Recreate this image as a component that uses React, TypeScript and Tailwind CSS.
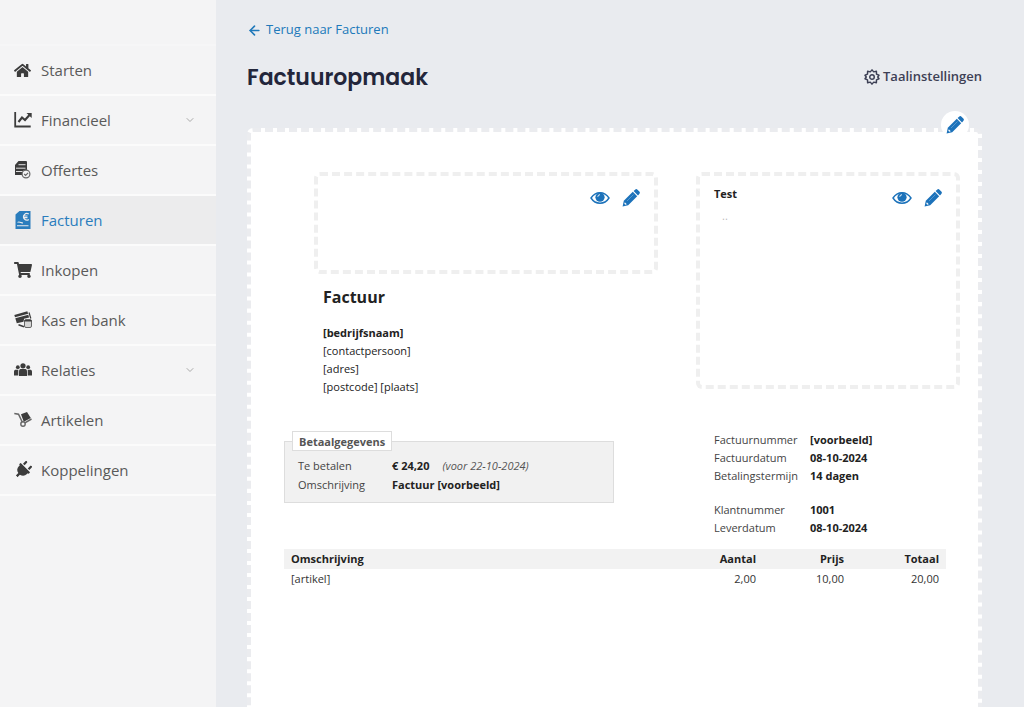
import type { ReactNode } from "react";
import { FaHome, FaPlug, FaShoppingCart } from "react-icons/fa";
import { LuArrowLeft, LuChevronDown } from "react-icons/lu";

function ChartIcon() {
  return (
    <svg viewBox="0 0 18 18" className="size-[18px]" fill="none" stroke="currentColor" strokeWidth="1.8">
      <path d="M1.2 1v14.500h15.500" />
      <path d="M4.500 11 8 6.500l3 2.500 4.500-5" strokeWidth="2.100" />
      <path d="M12.500 2h5.200v5z" fill="currentColor" stroke="none" />
    </svg>
  );
}

function QuoteIcon() {
  return (
    <svg viewBox="0 0 18 18" className="size-[18px]" fill="currentColor">
      <path d="M4.500 0H12a1 1 0 0 1 1 1v8a5 5 0 0 0-4.500 5H1V4z" />
      <path d="M4.500 3.700h7M2 7.200h9.500M2 10.500h7" stroke="#f4f4f5" strokeWidth=".9" />
      <circle cx="12" cy="13" r="3.900" fill="#f4f4f5" stroke="#666" strokeWidth="1.200" />
      <path d="m10.200 13 1.400 1.400 2.500-2.600" fill="none" stroke="#666" strokeWidth="1.200" />
    </svg>
  );
}

function InvoiceIcon() {
  return (
    <svg viewBox="0 0 18 18" className="size-[18px]" fill="currentColor">
      <path d="M5.500 0H16.500v18H1.500V3.500z" />
      <path d="M14.800 3.100a3.300 3.300 0 1 0 0 5.400M9 5h4.500M9 6.700h4.500" fill="none" stroke="#ececed" strokeWidth="1.200" />
      <path d="M3.500 11.400c2-1.200 3.500.6 5.500.6M3 14.800h11.500" fill="none" stroke="#ececed" strokeWidth="1.100" />
    </svg>
  );
}

function CardsIcon() {
  return (
    <svg viewBox="0 0 18 18" className="size-[18px]" fill="currentColor">
      <path d="m.3 4 13-3.700.8 2.500L1 6.300z" />
      <path d="m1.300 7.300 13-3.500.8 2.700-5 1.200-.6 3-6.700 1.600z" />
      <path d="M15 1.500 16.800 7.500" stroke="currentColor" strokeWidth="1.200" />
      <rect x="10.500" y="8.500" width="7" height="8" rx="1.500" fill="#d5d5d5" stroke="#666" strokeWidth="1" />
      <path d="M10.500 9.700h7M4.500 13.700l5.500 2" stroke="currentColor" strokeWidth="1.600" />
    </svg>
  );
}

function PeopleIcon() {
  return (
    <svg viewBox="0 0 18 14" className="h-[14px] w-[18px]" fill="currentColor">
      <circle cx="9" cy="2.800" r="2.600" />
      <circle cx="3.800" cy="4.200" r="1.900" />
      <circle cx="14.200" cy="4.200" r="1.900" />
      <path d="M5 13V8.200C5 6.600 6 6 7.200 6h3.600C12 6 13 6.600 13 8.200V13z" />
      <path d="M0 12.500V8.800C0 7.400.8 6.800 2 6.800h2.300V12.500zM18 12.500V8.800c0-1.400-.8-2-2-2h-2.300V12.500z" />
    </svg>
  );
}

function DollyIcon() {
  return (
    <svg viewBox="0 0 18 18" className="size-[18px]" fill="currentColor">
      <path d="m7 3.300 6-2.300 3.800 6-7 3.800z" />
      <path d="M.3 2.500 4.500 3.200l4 8.300M10.500 12.200l7-4.200" fill="none" stroke="#666" strokeWidth="1.500" />
      <circle cx="9" cy="13" r="2.200" fill="#f4f4f5" stroke="#666" strokeWidth="1.400" />
    </svg>
  );
}

function EyeIcon() {
  return (
    <svg viewBox="0 0 20 14" className="h-[14px] w-[20px]" fill="none">
      <path d="M1 7c4.500-7 13.500-7 18 0-4.500 7-13.500 7-18 0z" stroke="currentColor" strokeWidth="1.400" />
      <circle cx="10" cy="6.200" r="4.600" fill="currentColor" />
      <path d="M7.800 5.800A2.200 2.200 0 0 1 10 3.700" stroke="#fff" strokeWidth=".9" />
    </svg>
  );
}

function PencilIcon() {
  return (
    <svg viewBox="0 0 18 18" className="size-[18px]" fill="currentColor">
      <path d="M10.800 2.800 15.200 7.200 6.200 16.200.6 17.500 1.800 11.800z" />
      <path d="m11.600 2 1.500-1.300a1.700 1.700 0 0 1 2.400 0l1.800 1.800a1.700 1.700 0 0 1 0 2.400L16 6.400z" />
      <path d="m2.800 13.200 2 2-1.500.5-1-1z" fill="#fff" />
      <path d="m5 12 6.500-6.500" stroke="#6fa8d8" strokeWidth=".7" />
    </svg>
  );
}

function GearIcon() {
  return (
    <svg viewBox="0 0 24 24" className="size-4" fill="none" stroke="currentColor" strokeWidth="2.200" strokeLinejoin="round">
      <path d="M9.400 4.300 12 1.300l2.600 3 4-.900.100 4.200 3.800 1.800L20.600 12l1.900 2.600-3.800 1.800-.1 4.200-4-.900-2.600 3-2.600-3-4 .9-.1-4.200-3.800-1.800L3.400 12 1.500 9.400l3.800-1.800.1-4.200z" />
      <circle cx="12" cy="12" r="3.400" />
    </svg>
  );
}

type NavItem = { label: string; icon: ReactNode; active?: boolean; sub?: boolean };

const nav: NavItem[] = [
  { label: "Starten", icon: <FaHome className="size-[17px]" /> },
  { label: "Financieel", icon: <ChartIcon />, sub: true },
  { label: "Offertes", icon: <QuoteIcon /> },
  { label: "Facturen", icon: <InvoiceIcon />, active: true },
  { label: "Inkopen", icon: <FaShoppingCart className="size-[18px]" /> },
  { label: "Kas en bank", icon: <CardsIcon /> },
  { label: "Relaties", icon: <PeopleIcon />, sub: true },
  { label: "Artikelen", icon: <DollyIcon /> },
  { label: "Koppelingen", icon: <FaPlug className="size-[18px] rotate-45" /> },
];

function Tools() {
  return (
    <div className="flex items-center gap-3 text-[#1c72ba]">
      <button type="button" aria-label="Tonen"><EyeIcon /></button>
      <button type="button" aria-label="Bewerken"><PencilIcon /></button>
    </div>
  );
}

function Detail({ label, value }: { label: string; value: string }) {
  return (
    <div className="flex">
      <dt className="w-24 shrink-0 text-[#444]">{label}</dt>
      <dd className="font-bold">{value}</dd>
    </div>
  );
}

export default function App() {
  return (
    <div className="flex h-screen overflow-hidden bg-[#e9ebef] font-['Open_Sans',sans-serif] text-[#222]">
      <nav className="w-[216px] shrink-0 bg-[#f4f4f5] pt-11">
        <ul className="border-t-2 border-[#f6f6f7]">
          {nav.map((item) => (
            <li key={item.label} className="border-b-2 border-[#fbfbfb]">
              <a
                href="#"
                className={
                  item.active
                    ? "flex h-12 items-center bg-[#ececed] pr-5 pl-[14px] text-[15px] text-[#2a7dbd]"
                    : "flex h-12 items-center pr-5 pl-[14px] text-[15px] text-[#5a5a5a]"
                }
              >
                <span className={item.active ? "flex w-[27px]" : "flex w-[27px] text-[#3c3c3c]"}>{item.icon}</span>
                <span className="grow">{item.label}</span>
                {item.sub && <LuChevronDown className="size-3 text-[#aaa]" />}
              </a>
            </li>
          ))}
        </ul>
      </nav>

      <main className="min-w-0 grow pr-[42px] pl-[31px]">
        <a href="#" className="mt-5 flex h-5 items-center gap-1 text-[13px] text-[#2079ba]">
          <LuArrowLeft className="size-[15px]" strokeWidth={2.5} />
          Terug naar Facturen
        </a>
        <header className="mt-[21px] flex h-8 items-center justify-between">
          <h1 className="font-[Poppins,'Open_Sans',sans-serif] text-[22px] font-semibold text-[#23263b]">Factuuropmaak</h1>
          <button type="button" className="flex items-center gap-[3px] text-[13px] font-semibold text-[#3d4055]">
            <GearIcon />
            Taalinstellingen
          </button>
        </header>

        <section className="relative mt-[35px] min-h-screen rounded-md border-4 border-dashed border-[#ebecef] bg-white pt-10 pr-[18px] pl-[33px] text-[11px] leading-[18px]">
          <button
            type="button"
            aria-label="Opmaak bewerken"
            className="absolute -top-[21px] right-[9px] flex size-[28px] items-center justify-center rounded-full bg-white text-[#1c72ba]"
          >
            <PencilIcon />
          </button>

          <div className="flex items-start justify-between pl-[30px]">
            <div className="w-[344px]">
              <div className="flex h-[102px] items-start justify-end rounded-md border-4 border-dashed border-[#efefef] px-[14px] pt-[13px]">
                <Tools />
              </div>
              <div className="pl-[9px]">
                <h2 className="mt-[11px] text-[16px] leading-6 font-bold">Factuur</h2>
                <address className="mt-[15px] not-italic">
                  <strong>[bedrijfsnaam]</strong>
                  <br />
                  [contactpersoon]
                  <br />
                  [adres]
                  <br />
                  [postcode] [plaats]
                </address>
              </div>
            </div>
            <div className="flex h-[217px] w-[264px] items-start justify-between rounded-md border-4 border-dashed border-[#efefef] px-[14px]">
              <div className="pt-[9px]">
                <strong>Test</strong>
                <p className="pt-1 pl-2 text-[#bbb]">..</p>
              </div>
              <div className="pt-[13px]"><Tools /></div>
            </div>
          </div>

          <div className="mt-[35px] flex items-start justify-between pr-[14px]">
            <fieldset className="relative mt-[10px] h-[62px] w-[330px] border border-[#ddd] bg-[#f1f1f1] pt-[14px] pl-[13px] leading-[19px]">
              <legend className="absolute -top-[11px] left-[7px] h-5 border border-[#ddd] bg-white px-[6px] font-bold text-[#555]">
                Betaalgegevens
              </legend>
              <dl>
                <div className="flex">
                  <dt className="w-[94px] text-[#444]">Te betalen</dt>
                  <dd><strong>€ 24,20</strong><em className="pl-[13px] text-[#555]">(voor 22-10-2024)</em></dd>
                </div>
                <div className="flex">
                  <dt className="w-[94px] text-[#444]">Omschrijving</dt>
                  <dd className="font-bold">Factuur [voorbeeld]</dd>
                </div>
              </dl>
            </fieldset>
            <div className="w-[232px]">
              <dl>
                <Detail label="Factuurnummer" value="[voorbeeld]" />
                <Detail label="Factuurdatum" value="08-10-2024" />
                <Detail label="Betalingstermijn" value="14 dagen" />
              </dl>
              <dl className="mt-4">
                <Detail label="Klantnummer" value="1001" />
                <Detail label="Leverdatum" value="08-10-2024" />
              </dl>
            </div>
          </div>

          <div className="pr-[14px]">
            <table className="mt-3 w-full">
              <thead>
                <tr className="h-5 bg-[#f2f2f2]">
                  <th className="pl-[7px] text-left">Omschrijving</th>
                  <th className="w-24 text-right">Aantal</th>
                  <th className="w-[88px] text-right">Prijs</th>
                  <th className="w-[102px] pr-[7px] text-right">Totaal</th>
                </tr>
              </thead>
              <tbody>
                <tr className="h-5 text-[#333]">
                  <td className="pl-[7px]">[artikel]</td>
                  <td className="text-right">2,00</td>
                  <td className="text-right">10,00</td>
                  <td className="pr-[7px] text-right">20,00</td>
                </tr>
              </tbody>
            </table>
          </div>
        </section>
      </main>
    </div>
  );
}
